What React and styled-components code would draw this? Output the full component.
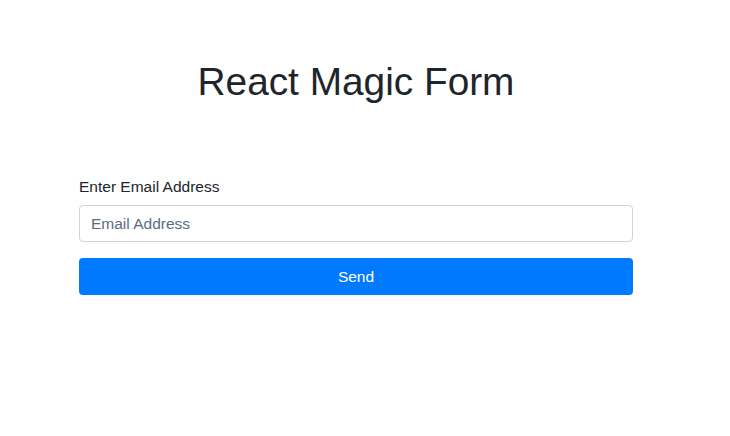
import React from "react";
import styled, { createGlobalStyle } from "styled-components";

const GlobalStyle = createGlobalStyle`
  body {
    margin: 0;
    background: #ffffff;
    font-family: "Liberation Sans", Arial, sans-serif;
    color: #212529;
  }
`;

const Page = styled.main`
  width: 712px;
  display: flex;
  flex-direction: column;
  align-items: center;
`;

const Title = styled.h1`
  margin: 58px 0 0;
  font-size: 38.8px;
  font-weight: 400;
  line-height: 47px;
  color: #212529;
`;

const Form = styled.form`
  width: 554px;
  margin-top: 71px;
  display: flex;
  flex-direction: column;
`;

const Label = styled.label`
  font-size: 15.5px;
  line-height: 22px;
  margin-bottom: 7px;
`;

const Input = styled.input`
  box-sizing: border-box;
  height: 37px;
  padding: 0 11px;
  border: 1px solid #ced4da;
  border-radius: 4px;
  font-family: inherit;
  font-size: 15.5px;
  color: #495057;
  outline: none;

  &::placeholder {
    color: #5b6b86;
  }
`;

const Button = styled.button`
  margin-top: 16px;
  height: 37px;
  border: none;
  border-radius: 4px;
  background: #007bff;
  color: #ffffff;
  font-family: inherit;
  font-size: 15.5px;
  cursor: pointer;
`;

export default function App() {
  return (
    <>
      <GlobalStyle />
      <Page>
        <Title>React Magic Form</Title>
        <Form onSubmit={(e) => e.preventDefault()}>
          <Label htmlFor="email">Enter Email Address</Label>
          <Input id="email" type="email" placeholder="Email Address" />
          <Button type="submit">Send</Button>
        </Form>
      </Page>
    </>
  );
}
